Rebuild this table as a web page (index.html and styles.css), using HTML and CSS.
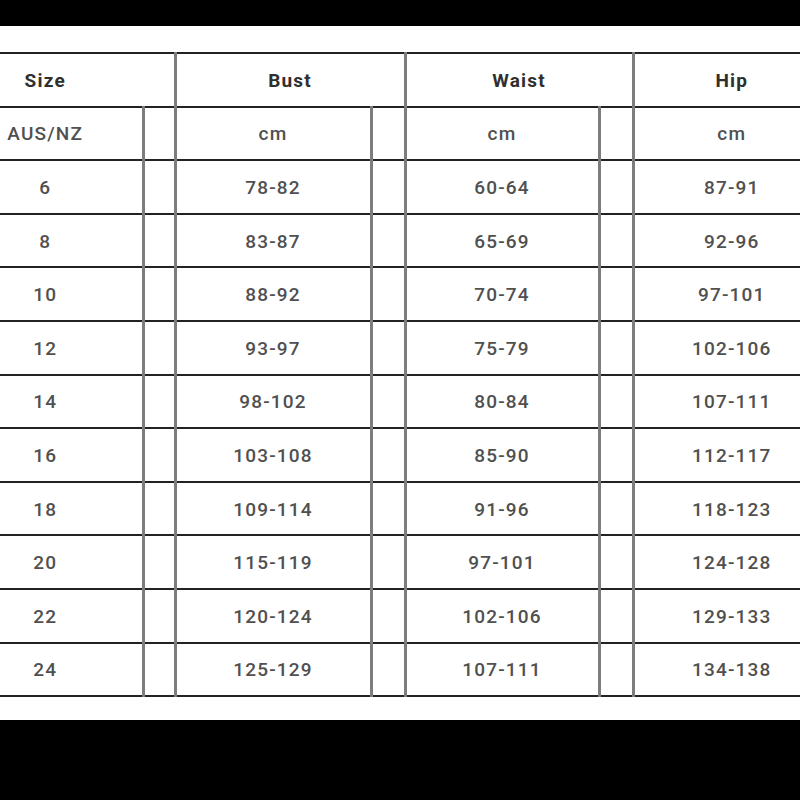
FILE: index.html
```html
<!DOCTYPE html>
<html lang="en">
<head>
<meta charset="utf-8">
<title>Size Chart</title>
<link rel="stylesheet" href="styles.css">
</head>
<body>
<div class="sheet">
  <table class="chart">
    <colgroup>
      <col class="c-size"><col class="c-gap1">
      <col class="c-bust"><col class="c-gap">
      <col class="c-waist"><col class="c-gap">
      <col class="c-hip">
    </colgroup>
    <thead>
      <tr>
        <th colspan="2" class="h-size">Size</th>
        <th colspan="2">Bust</th>
        <th colspan="2">Waist</th>
        <th>Hip</th>
      </tr>
    </thead>
    <tbody>
      <tr><td>AUS/NZ</td><td></td><td>cm</td><td></td><td>cm</td><td></td><td>cm</td></tr>
      <tr><td>6</td><td></td><td>78-82</td><td></td><td>60-64</td><td></td><td>87-91</td></tr>
      <tr><td>8</td><td></td><td>83-87</td><td></td><td>65-69</td><td></td><td>92-96</td></tr>
      <tr><td>10</td><td></td><td>88-92</td><td></td><td>70-74</td><td></td><td>97-101</td></tr>
      <tr><td>12</td><td></td><td>93-97</td><td></td><td>75-79</td><td></td><td>102-106</td></tr>
      <tr><td>14</td><td></td><td>98-102</td><td></td><td>80-84</td><td></td><td>107-111</td></tr>
      <tr><td>16</td><td></td><td>103-108</td><td></td><td>85-90</td><td></td><td>112-117</td></tr>
      <tr><td>18</td><td></td><td>109-114</td><td></td><td>91-96</td><td></td><td>118-123</td></tr>
      <tr><td>20</td><td></td><td>115-119</td><td></td><td>97-101</td><td></td><td>124-128</td></tr>
      <tr><td>22</td><td></td><td>120-124</td><td></td><td>102-106</td><td></td><td>129-133</td></tr>
      <tr><td>24</td><td></td><td>125-129</td><td></td><td>107-111</td><td></td><td>134-138</td></tr>
    </tbody>
  </table>
</div>
</body>
</html>
```

FILE: styles.css
```css
html, body {
  margin: 0;
  padding: 0;
  background: #000;
}
body {
  width: 800px;
  height: 800px;
  overflow: hidden;
  padding-top: 26px;
  box-sizing: border-box;
  font-family: Roboto, "Liberation Sans", Arial, sans-serif;
}
.sheet {
  background: #fff;
  padding: 26px 0 23px;
  overflow: hidden;
}
.chart {
  border-collapse: collapse;
  table-layout: fixed;
  width: 880px;
  margin-left: -51px;
}
.c-size { width: 194px; }
.c-gap1 { width: 32px; }
.c-bust { width: 196px; }
.c-gap { width: 34px; }
.c-waist { width: 194px; }
.c-hip { width: 196px; }

.chart th,
.chart td {
  border-top: 2px solid #222;
  border-bottom: 2px solid #222;
  border-left: 3px solid #7d7d7d;
  border-right: 3px solid #7d7d7d;
  text-align: center;
  vertical-align: middle;
  padding: 1px 0 0;
  height: 50.6px;
  font-size: 19px;
  font-weight: 500;
  letter-spacing: 1.2px;
  color: #505050;
}
.chart th {
  font-weight: 700;
  color: #2f2f2f;
}
.chart tr > :first-child { border-left: none; }
.chart tr > :last-child { border-right: none; }
.chart .h-size { padding-right: 32px; }
```
